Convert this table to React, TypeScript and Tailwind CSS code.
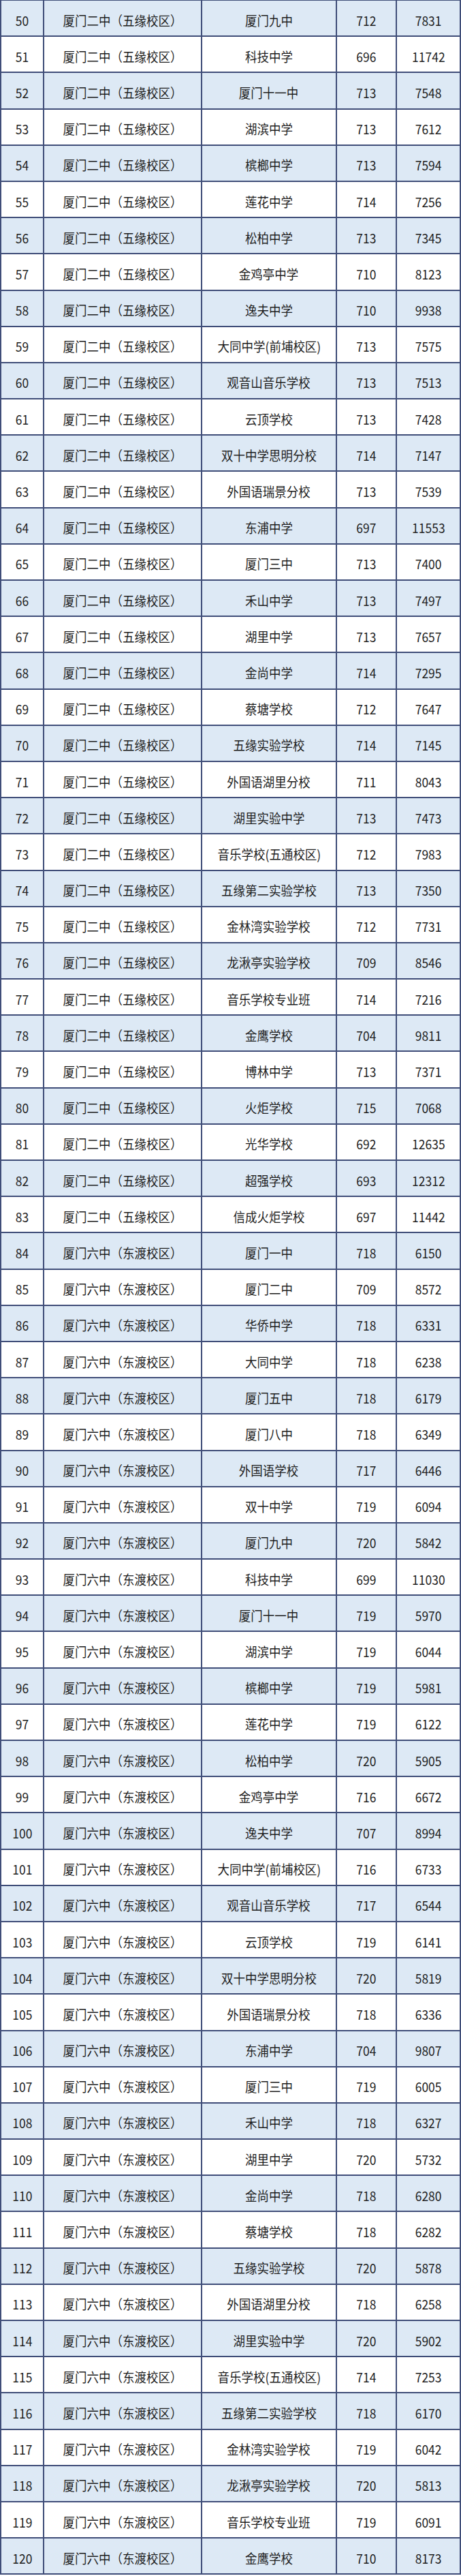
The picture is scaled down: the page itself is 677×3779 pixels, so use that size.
const wy = "厦门二中（五缘校区）"
const dd = "厦门六中（东渡校区）"

// [序号, 目标学校, 分数, 排名]
const wyRows: [number, string, number, number][] = [
  [50, "厦门九中", 712, 7831],
  [51, "科技中学", 696, 11742],
  [52, "厦门十一中", 713, 7548],
  [53, "湖滨中学", 713, 7612],
  [54, "槟榔中学", 713, 7594],
  [55, "莲花中学", 714, 7256],
  [56, "松柏中学", 713, 7345],
  [57, "金鸡亭中学", 710, 8123],
  [58, "逸夫中学", 710, 9938],
  [59, "大同中学(前埔校区)", 713, 7575],
  [60, "观音山音乐学校", 713, 7513],
  [61, "云顶学校", 713, 7428],
  [62, "双十中学思明分校", 714, 7147],
  [63, "外国语瑞景分校", 713, 7539],
  [64, "东浦中学", 697, 11553],
  [65, "厦门三中", 713, 7400],
  [66, "禾山中学", 713, 7497],
  [67, "湖里中学", 713, 7657],
  [68, "金尚中学", 714, 7295],
  [69, "蔡塘学校", 712, 7647],
  [70, "五缘实验学校", 714, 7145],
  [71, "外国语湖里分校", 711, 8043],
  [72, "湖里实验中学", 713, 7473],
  [73, "音乐学校(五通校区)", 712, 7983],
  [74, "五缘第二实验学校", 713, 7350],
  [75, "金林湾实验学校", 712, 7731],
  [76, "龙湫亭实验学校", 709, 8546],
  [77, "音乐学校专业班", 714, 7216],
  [78, "金鹰学校", 704, 9811],
  [79, "博林中学", 713, 7371],
  [80, "火炬学校", 715, 7068],
  [81, "光华学校", 692, 12635],
  [82, "超强学校", 693, 12312],
  [83, "信成火炬学校", 697, 11442],
]

const ddRows: [number, string, number, number][] = [
  [84, "厦门一中", 718, 6150],
  [85, "厦门二中", 709, 8572],
  [86, "华侨中学", 718, 6331],
  [87, "大同中学", 718, 6238],
  [88, "厦门五中", 718, 6179],
  [89, "厦门八中", 718, 6349],
  [90, "外国语学校", 717, 6446],
  [91, "双十中学", 719, 6094],
  [92, "厦门九中", 720, 5842],
  [93, "科技中学", 699, 11030],
  [94, "厦门十一中", 719, 5970],
  [95, "湖滨中学", 719, 6044],
  [96, "槟榔中学", 719, 5981],
  [97, "莲花中学", 719, 6122],
  [98, "松柏中学", 720, 5905],
  [99, "金鸡亭中学", 716, 6672],
  [100, "逸夫中学", 707, 8994],
  [101, "大同中学(前埔校区)", 716, 6733],
  [102, "观音山音乐学校", 717, 6544],
  [103, "云顶学校", 719, 6141],
  [104, "双十中学思明分校", 720, 5819],
  [105, "外国语瑞景分校", 718, 6336],
  [106, "东浦中学", 704, 9807],
  [107, "厦门三中", 719, 6005],
  [108, "禾山中学", 718, 6327],
  [109, "湖里中学", 720, 5732],
  [110, "金尚中学", 718, 6280],
  [111, "蔡塘学校", 718, 6282],
  [112, "五缘实验学校", 720, 5878],
  [113, "外国语湖里分校", 718, 6258],
  [114, "湖里实验中学", 720, 5902],
  [115, "音乐学校(五通校区)", 714, 7253],
  [116, "五缘第二实验学校", 718, 6170],
  [117, "金林湾实验学校", 719, 6042],
  [118, "龙湫亭实验学校", 720, 5813],
  [119, "音乐学校专业班", 719, 6091],
  [120, "金鹰学校", 710, 8173],
]

const rows = [
  ...wyRows.map(([n, s, a, b]) => ({ n, from: wy, to: s, score: a, rank: b })),
  ...ddRows.map(([n, s, a, b]) => ({ n, from: dd, to: s, score: a, rank: b })),
]

function Cell({ children, last }: { children: React.ReactNode; last?: boolean }) {
  return (
    <div
      className={`flex items-center justify-center pt-[5px] ${last ? "" : "border-r-2 border-[#3f4d78]"}`}
    >
      <span className="inline-block whitespace-nowrap scale-x-[0.92]">{children}</span>
    </div>
  )
}

export default function App() {
  return (
    <div
      className="w-[677px] bg-white text-[19px] leading-none text-[#1e1e1e]"
      style={{ fontFamily: '"Noto Sans CJK SC", "Noto Sans", sans-serif' }}
    >
      <div className="border-x-2 border-t border-[#3f4d78]">
        {rows.map((r) => (
          <div
            key={r.n}
            className={`grid h-[53.2px] grid-cols-[63px_232px_198px_88px_1fr] border-b-2 border-[#3f4d78] ${
              r.n % 2 === 0 ? "bg-[#dde9f5]" : "bg-white"
            }`}
          >
            <Cell>{r.n}</Cell>
            <Cell>{r.from}</Cell>
            <Cell>{r.to}</Cell>
            <Cell>{r.score}</Cell>
            <Cell last>{r.rank}</Cell>
          </div>
        ))}
      </div>
    </div>
  )
}
